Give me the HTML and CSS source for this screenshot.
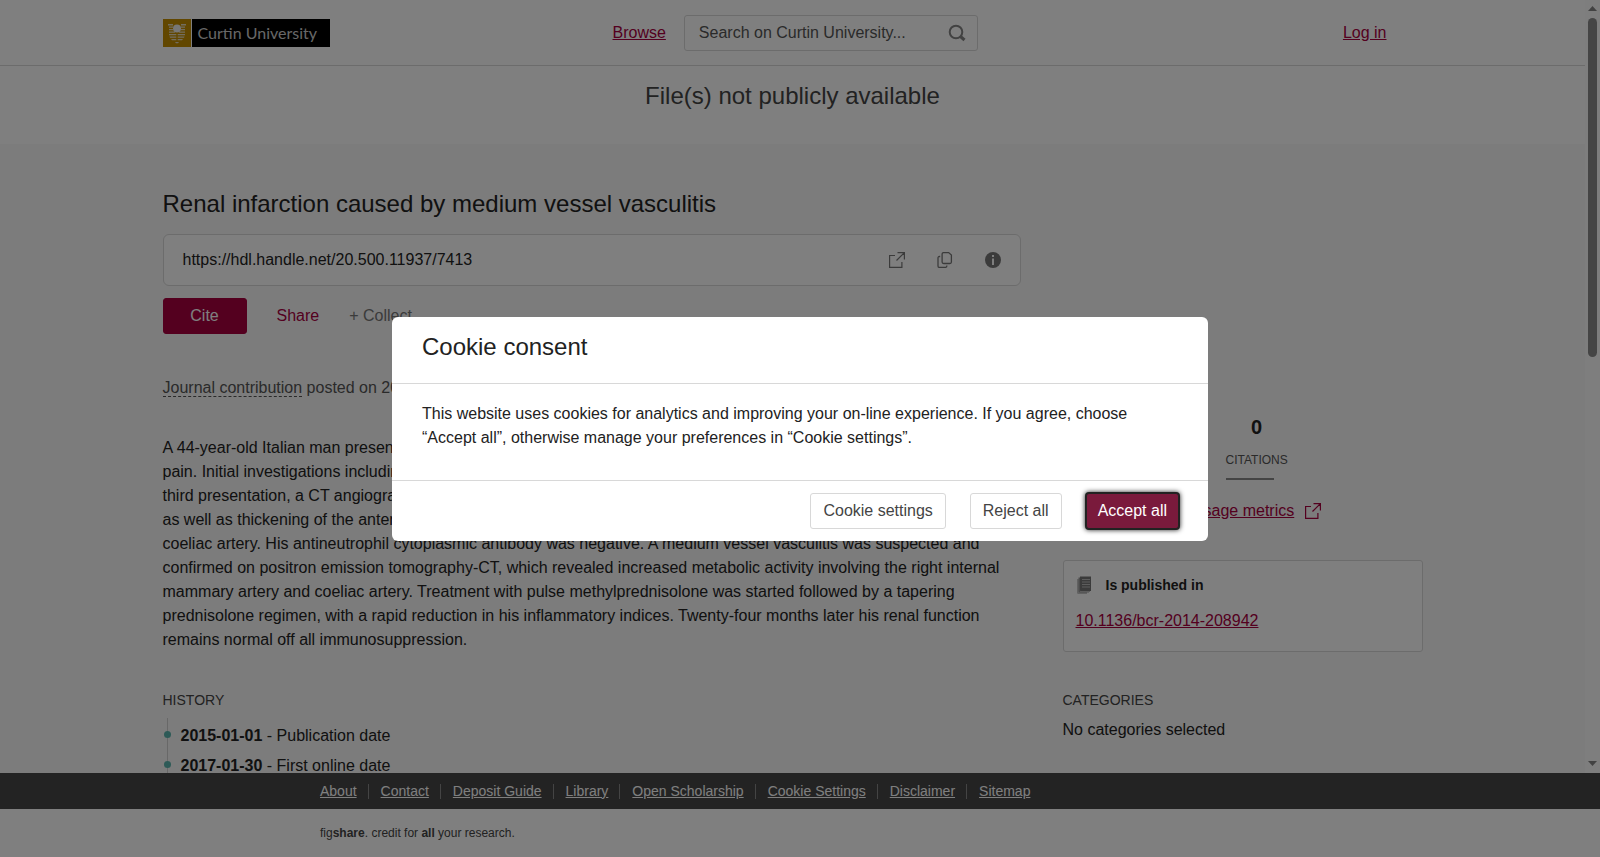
FILE: index.html
```html
<!DOCTYPE html>
<html lang="en">
<head>
<meta charset="utf-8">
<title>Renal infarction caused by medium vessel vasculitis</title>
<link rel="stylesheet" href="styles.css">
</head>
<body>
<div class="viewport">
  <div class="page">
    <header class="site-header">
      <div class="container header-row">
        <a class="logo" href="#" aria-label="Curtin University home">
          <svg class="logo-mark" viewBox="0 0 28 28" aria-hidden="true">
            <rect width="28" height="28" fill="#c58f00"/>
            <path d="M5 5h5v1.500H5zM18 5h5v1.500h-5zM6 7.500h4v1.300H6zM18 7.500h4v1.300h-4zM6 10h4v1.300H6zM18 10h4v1.300h-4zM6 12.500h6v1.300H6zM16 12.500h6v1.300h-6zM6 15h7.300v1.200H6zM14.700 15H22v1.200h-7.300zM6.500 17.500h6.800v1.200H7zM14.700 17.500h6.800l-.5 1.200h-6.300zM8 20h5.300v1.200H9zM14.700 20H20l-1 1.200h-4.300zM12 23h4l-1 1.300h-2z" fill="#e6dcc0"/>
            <circle cx="14" cy="9.500" r="4" fill="#eeeeee"/>
          </svg>
          <span class="logo-name">Curtin University</span>
        </a>
        <nav class="header-nav">
          <a class="link" href="#">Browse</a>
          <form class="search">
            <input class="search-input" type="text" aria-label="Search" placeholder="Search on Curtin University...">
            <button class="icon-button search-button" type="button" aria-label="Submit search">
              <svg width="18" height="18" viewBox="0 0 18 18" fill="none" stroke="#858585" stroke-width="2"><circle cx="8" cy="8" r="6.300"/><path d="M12.500 12.500l4 3.500" stroke-width="3"/></svg>
            </button>
          </form>
        </nav>
        <a class="link login" href="#">Log in</a>
      </div>
    </header>
    <section class="notice"><h2 class="notice-title">File(s) not publicly available</h2></section>
    <main class="container content">
      <article class="item">
        <h1 class="item-title">Renal infarction caused by medium vessel vasculitis</h1>
        <div class="handle">
          <span class="handle-url">https://hdl.handle.net/20.500.11937/7413</span>
          <button class="icon-button" type="button" aria-label="Open link">
            <svg width="16" height="16" viewBox="0 0 16 16" fill="none" stroke="#777" stroke-width="1.200"><path d="M6 3.500H.6v11.900h12.300V10M8.500 .6h6.900v7M15.400 .6L7.500 8.500"/></svg>
          </button>
          <button class="icon-button" type="button" aria-label="Copy link">
            <svg width="16" height="16" viewBox="0 0 16 16" fill="none" stroke="#777" stroke-width="1.300"><path d="M6.600 .6h5L14.400 3v7q0 1.500-1.500 1.500H6.600q-1.500 0-1.500-1.500V2.100Q5.100.6 6.600.6zM3.200 4.500H2.500Q1 4.500 1 6v7.900q0 1.500 1.500 1.500h5.900q1.500 0 1.500-2"/></svg>
          </button>
          <button class="icon-button" type="button" aria-label="Information">
            <svg width="16" height="16" viewBox="0 0 16 16"><circle cx="8" cy="8" r="8" fill="#777"/><path d="M7 3h2v2H7zM7 6.500h2V13H7z" fill="#fff"/></svg>
          </button>
        </div>
        <div class="actions">
          <button class="button cite" type="button">Cite</button>
          <button class="text-button share" type="button">Share</button>
          <button class="text-button collect" type="button">+ Collect</button>
        </div>
        <p class="meta"><span class="item-type">Journal contribution</span> posted on 2017-01-30</p>
        <p class="abstract">A 44-year-old Italian man presented with sudden onset<br>pain. Initial investigations including imaging<br>third presentation, a CT angiogram showed<br>as well as thickening of the anterior wall of the<br>coeliac artery. His antineutrophil cytoplasmic antibody was negative. A medium vessel vasculitis was suspected and confirmed on positron emission tomography-CT, which revealed increased metabolic activity involving the right internal mammary artery and coeliac artery. Treatment with pulse methylprednisolone was started followed by a tapering prednisolone regimen, with a rapid reduction in his inflammatory indices. Twenty-four months later his renal function remains normal off all immunosuppression.</p>
        <h2 class="section-title">HISTORY</h2>
        <ul class="timeline">
          <li class="event"><b>2015-01-01</b> - Publication date</li>
          <li class="event"><b>2017-01-30</b> - First online date</li>
        </ul>
      </article>
      <aside class="sidebar">
        <div class="stats">
          <div class="stat"><b class="stat-value">0</b><span class="stat-label">CITATIONS</span></div>
        </div>
        <a class="link metrics" href="#"><span>See usage metrics</span>
          <svg width="16" height="16" viewBox="0 0 16 16" fill="none" stroke="currentColor" stroke-width="1.200"><path d="M6 3.500H.6v11.900h12.300V10M8.500 .6h6.900v7M15.400 .6L7.500 8.500"/></svg>
        </a>
        <section class="card">
          <h3 class="card-title">
            <svg width="16" height="18" viewBox="0 0 16 18" aria-hidden="true"><path d="M1 3h10v15H2.500Q1 18 1 16.500z" fill="#c4c4c4"/><path d="M2.500 1.500H13v15H4q-1.500 0-1.500-1.500z" fill="#999"/><path d="M4 0h11v15H5q-1 0-1-1z" fill="#777"/><path d="M4 .5h11M6 3.500h8M6 6h8M6 8.500h8M6 11h8M4 15.500h10" stroke="#bbb"/></svg>
            Is published in
          </h3>
          <a class="link" href="#">10.1136/bcr-2014-208942</a>
        </section>
        <h2 class="section-title">CATEGORIES</h2>
        <p class="categories">No categories selected</p>
      </aside>
    </main>
  </div>
  <div class="scrollbar" aria-hidden="true">
    <svg width="9" height="5" viewBox="0 0 9 5"><path d="M0 5L4.500 0 9 5z" fill="#858585"/></svg>
    <div class="thumb-track"><div class="thumb"></div></div>
    <svg width="9" height="5" viewBox="0 0 9 5"><path d="M0 0h9L4.500 5z" fill="#858585"/></svg>
  </div>
</div>
<footer>
  <div class="footer-bar">
    <nav class="footer-inner footer-nav">
      <a href="#">About</a><a href="#">Contact</a><a href="#">Deposit Guide</a><a href="#">Library</a><a href="#">Open Scholarship</a><a href="#">Cookie Settings</a><a href="#">Disclaimer</a><a href="#">Sitemap</a>
    </nav>
  </div>
  <p class="footer-inner credit">fig<b>share</b>. credit for <b>all</b> your research.</p>
</footer>
<div class="overlay">
  <div class="dialog" role="dialog" aria-modal="true" aria-labelledby="consent-title">
    <h2 class="dialog-title" id="consent-title">Cookie consent</h2>
    <p class="dialog-body">This website uses cookies for analytics and improving your on-line experience. If you agree, choose “Accept all”, otherwise manage your preferences in “Cookie settings”.</p>
    <div class="dialog-actions">
      <button class="button" type="button">Cookie settings</button>
      <button class="button" type="button">Reject all</button>
      <button class="button accept" type="button">Accept all</button>
    </div>
  </div>
</div>
</body>
</html>
```

FILE: styles.css
```css
* { box-sizing: border-box; }
body {
  margin: 0;
  height: 100vh;
  display: flex;
  flex-direction: column;
  overflow: hidden;
  background: #fff;
  color: #222;
  font: 16px/24px "Liberation Sans", Arial, sans-serif;
}
h1, h2, h3, p, ul { margin: 0; padding: 0; font-weight: normal; }
button, input { font: inherit; color: inherit; }
svg { display: block; flex: none; }

.link { color: #a8003f; text-decoration: underline; }
.container { width: 100%; max-width: 1260px; margin: 0 auto; }
.viewport { flex: 1; min-height: 0; display: flex; }
.page { flex: 1; min-width: 0; overflow: hidden; background: #f8f8f8; }

.site-header { background: #fff; border-bottom: 1px solid #d8d8d8; }
.header-row {
  display: grid;
  grid-template-columns: 450px 1fr auto;
  align-items: center;
  padding: 15px 36px 14px 0;
}
.logo { display: flex; justify-self: start; text-decoration: none; }
.logo-mark { width: 28px; height: 28px; }
.logo-name {
  width: 138px;
  margin-left: 1px;
  padding-left: 6px;
  background: #000;
  color: #d0d0d0;
  font: 16px/28px Lato, "Open Sans", sans-serif;
  white-space: nowrap;
}
.header-nav { display: flex; align-items: center; gap: 18px; }
.search {
  display: flex;
  align-items: center;
  width: 294px;
  height: 36px;
  padding: 0 11px 0 14px;
  border: 1px solid #d8d8d8;
  border-radius: 3px;
  background: #fff;
}
.search-input { flex: 1; min-width: 0; padding: 0; border: 0; background: none; outline: none; }
.search-input::placeholder { color: #555; opacity: 1; }
.icon-button { padding: 0; border: 0; background: none; }

.notice { padding: 15px 0 33px; background: #fff; text-align: center; }
.notice-title { color: #444; font-size: 24px; line-height: 30px; }

.content {
  display: grid;
  grid-template-columns: 1fr 360px;
  gap: 42px;
  padding-top: 42px;
}
.item-title { font-size: 24px; line-height: 36px; }
.handle {
  display: flex;
  align-items: center;
  gap: 32px;
  height: 52px;
  margin-top: 12px;
  padding: 0 19px;
  border: 1px solid #d8d8d8;
  border-radius: 6px;
  background: #fff;
}
.handle-url { flex: 1; }
.actions { display: flex; align-items: center; gap: 30px; margin-top: 12px; }
.button {
  height: 36px;
  padding: 0 12px;
  border: 1px solid #d8d8d8;
  border-radius: 3px;
  background: #fff;
  color: #444;
}
.cite { width: 84px; border-color: #a8003f; background: #a8003f; color: #fff; }
.text-button { padding: 0; border: 0; background: none; }
.share { color: #a8003f; }
.collect { color: #777; }
.meta { margin-top: 42px; color: #555; }
.item-type { border-bottom: 1px dashed #555; }
.abstract { margin-top: 36px; }
.section-title { margin-top: 36px; color: #444; font-size: 14px; line-height: 24px; }
.timeline { margin-top: 6px; list-style: none; }
.event {
  position: relative;
  padding: 6px 0 0 18px;
  background: linear-gradient(#d0d0d0, #d0d0d0) 4px 0 / 1px 100% no-repeat;
}
.event::before {
  content: "";
  position: absolute;
  top: 13px;
  left: 1px;
  width: 7px;
  height: 7px;
  border-radius: 50%;
  background: #5bb5ae;
}

.sidebar { padding-top: 229px; }
.stats { display: flex; padding-left: 163px; }
.stat { display: flex; flex-direction: column; width: 62px; }
.stat-value { font-size: 20px; line-height: 24px; text-align: center; }
.stat-label { margin-top: 9px; color: #555; font-size: 12px; line-height: 24px; }
.stat::after { content: ""; width: 48px; height: 2px; margin-top: 6px; background: #888; }
.metrics {
  display: flex;
  align-items: center;
  justify-content: center;
  gap: 11px;
  margin-top: 19px;
  padding-right: 2px;
}
.card {
  margin-top: 37px;
  padding: 12px 12px 18px;
  border: 1px solid #d8d8d8;
  border-radius: 3px;
  background: #fff;
}
.card-title {
  display: flex;
  align-items: center;
  gap: 14px;
  margin-bottom: 12px;
  font-size: 14px;
  font-weight: bold;
  line-height: 24px;
}
.categories { margin-top: 6px; }

.scrollbar {
  display: flex;
  flex-direction: column;
  align-items: center;
  width: 15px;
  padding: 6px 0 7px;
  background: #fcfcfc;
}
.thumb-track { flex: 1; padding: 7px 0 5px; }
.thumb { width: 9px; height: 46%; border-radius: 5px; background: #8b8b8b; }

.footer-bar { background: #464646; }
.footer-inner { max-width: 960px; margin: 0 auto; }
.footer-nav { display: flex; align-items: center; height: 36px; font-size: 14px; line-height: 15px; }
.footer-nav a { color: #fff; }
.footer-nav a + a { margin-left: 11px; padding-left: 12px; border-left: 1px solid #888; }
.credit { padding: 12px 0; color: #444; font-size: 12px; }

.overlay {
  position: fixed;
  inset: 0;
  display: flex;
  align-items: center;
  justify-content: center;
  background: rgba(0, 0, 0, 0.5);
}
.dialog { width: 816px; max-width: 100%; border-radius: 6px; background: #fff; }
.dialog-title { padding: 12px 30px 18px; border-bottom: 1px solid #d8d8d8; font-size: 24px; line-height: 36px; }
.dialog-body { padding: 18px 30px 30px; }
.dialog-actions {
  display: flex;
  justify-content: flex-end;
  gap: 24px;
  padding: 12px 29px 12px 30px;
  border-top: 1px solid #d8d8d8;
}
.accept {
  padding: 0 11px;
  border-color: #222;
  background: #7a1a3c;
  color: #fff;
  box-shadow: 0 0 0 1px #222, 0 0 5px 1px #222;
}
```
